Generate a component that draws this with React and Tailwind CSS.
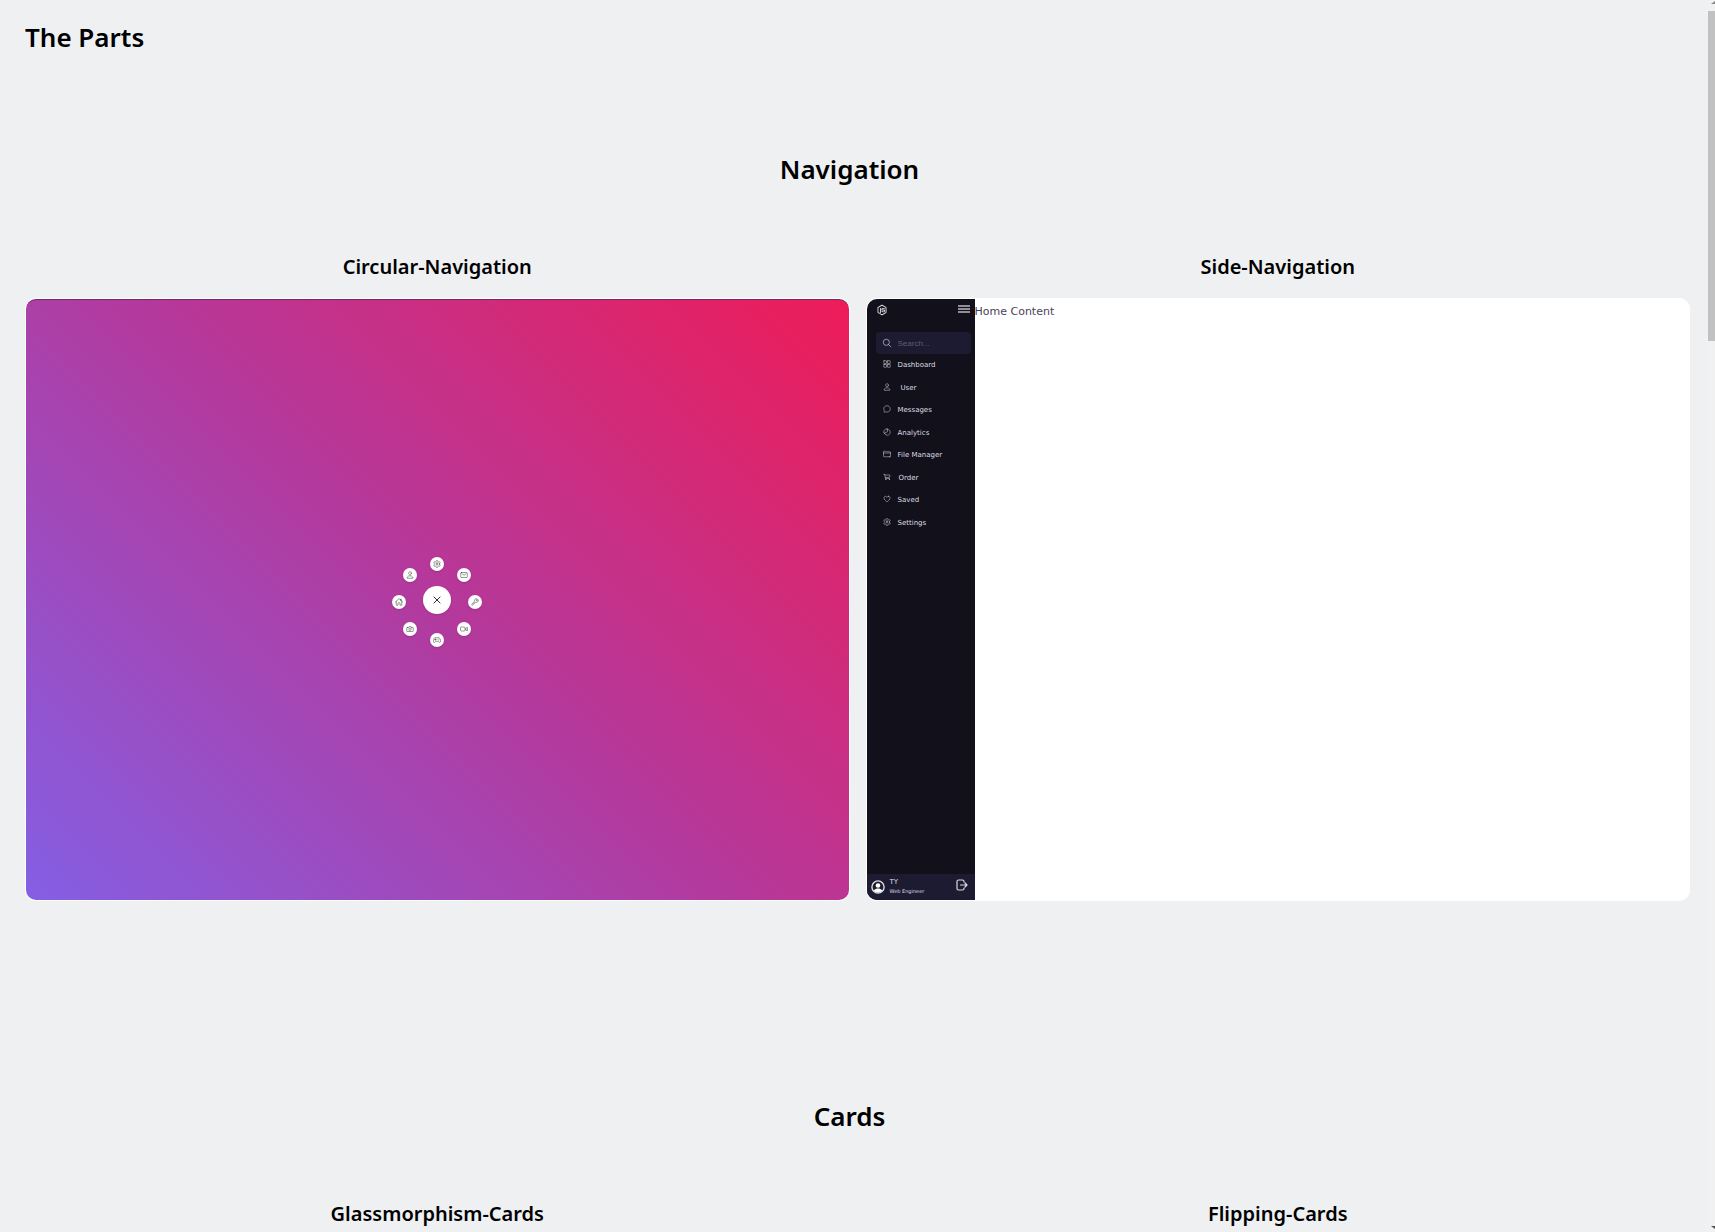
import React from "react";
import {
  IoSettingsOutline, IoMailOutline, IoKeyOutline, IoVideocamOutline, IoGameControllerOutline,
  IoCameraOutline, IoHomeOutline, IoPersonOutline, IoCloseOutline, IoGridOutline,
  IoChatbubbleOutline, IoPieChartOutline, IoFolderOutline, IoCartOutline, IoHeartOutline,
  IoSearchOutline, IoLogoNodejs,
} from "react-icons/io5";

const ring = [
  { label: "Settings", Icon: IoSettingsOutline, place: "left-[38px] top-0" },
  { label: "Mail", Icon: IoMailOutline, place: "left-[65px] top-[11px]" },
  { label: "Keys", Icon: IoKeyOutline, place: "left-[76px] top-[38px]" },
  { label: "Video", Icon: IoVideocamOutline, place: "left-[65px] top-[65px]" },
  { label: "Games", Icon: IoGameControllerOutline, place: "left-[38px] top-[76px]" },
  { label: "Camera", Icon: IoCameraOutline, place: "left-[11px] top-[65px]" },
  { label: "Home", Icon: IoHomeOutline, place: "left-0 top-[38px]" },
  { label: "Profile", Icon: IoPersonOutline, place: "left-[11px] top-[11px]" },
];

const links = [
  { label: "Dashboard", Icon: IoGridOutline, pad: "" },
  { label: "User", Icon: IoPersonOutline, pad: "pl-[3px]" },
  { label: "Messages", Icon: IoChatbubbleOutline, pad: "" },
  { label: "Analytics", Icon: IoPieChartOutline, pad: "" },
  { label: "File Manager", Icon: IoFolderOutline, pad: "" },
  { label: "Order", Icon: IoCartOutline, pad: "pl-px" },
  { label: "Saved", Icon: IoHeartOutline, pad: "" },
  { label: "Settings", Icon: IoSettingsOutline, pad: "" },
];

function AvatarIcon() {
  return (
    <svg className="h-3.5 w-3.5" viewBox="0 0 28 28" fill="none" aria-hidden="true">
      <circle cx="14" cy="14" r="12.2" stroke="#dddce2" strokeWidth="2.8" />
      <circle cx="14" cy="11" r="4.6" fill="#fff" />
      <path d="M5.500 21.500C8 17.500 11 17 14 17s6 .5 8.500 4.500A12 12 0 0 1 14 25a12 12 0 0 1-8.500-3.500z" fill="#fff" />
    </svg>
  );
}

function LogOutIcon() {
  return (
    <svg className="h-3 w-3" viewBox="0 0 24 24" fill="none" stroke="currentColor" strokeWidth="2.4" strokeLinecap="round" strokeLinejoin="round" aria-hidden="true">
      <path d="M16 6V5a3 3 0 0 0-3-3H5a3 3 0 0 0-3 3v14a3 3 0 0 0 3 3h8a3 3 0 0 0 3-3v-1M9 12h13M18 8l4 4-4 4" />
    </svg>
  );
}

function CircularPreview() {
  return (
    <div className="aspect-[824/603] rounded-[11px] bg-white p-px">
      <div className="flex h-full items-center justify-center rounded-[10px] border-t border-[#6d2a68] bg-linear-[45deg,#845fe4,#b4399c,#ee1c58] pt-1">
        <nav aria-label="Circular" className="relative h-[90px] w-[90px]">
          <button aria-label="Close menu" className="absolute left-[31px] top-[29px] flex h-7 w-7 items-center justify-center rounded-full bg-white text-sm text-[#111] shadow-sm">
            <IoCloseOutline className="stroke-[16]" />
          </button>
          {ring.map(({ label, Icon, place }) => (
            <a key={label} href="#" aria-label={label} className={"absolute flex h-3.5 w-3.5 items-center justify-center rounded-full bg-white text-[8px] text-[#333] shadow-sm " + place}>
              <Icon />
            </a>
          ))}
        </nav>
      </div>
    </div>
  );
}

function SidePreview() {
  return (
    <div className="flex aspect-[824/603] overflow-hidden rounded-[11px] bg-white p-px font-['DejaVu_Sans',sans-serif]">
      <aside className="flex w-[108px] flex-col rounded-l-[10px] bg-[#12101a] text-[#dddce2]">
        <div className="flex items-start justify-between pl-[9px] pr-[5px] pt-[5px]">
          <IoLogoNodejs className="h-3 w-3" />
          <button aria-label="Menu" className="mt-px flex h-2 w-3 flex-col justify-between">
            <span className="h-0.5 w-full bg-[#8f8d98]" />
            <span className="h-0.5 w-full bg-[#8f8d98]" />
            <span className="h-0.5 w-full bg-[#8f8d98]" />
          </button>
        </div>
        <label className="ml-[9px] mr-1 mt-4 flex h-[22px] items-center rounded bg-[#1d1b31] pl-1.5">
          <IoSearchOutline className="h-[10px] w-[10px]" />
          <input aria-label="Search" placeholder="Search..." className="ml-1.5 w-14 bg-transparent text-[8px] leading-none font-['Liberation_Sans',sans-serif] placeholder:text-[#5f5d6b]" />
        </label>
        <ul className="flex h-[180px] flex-col text-[7px]">
          {links.map(({ label, Icon, pad }) => (
            <li key={label} className="flex-1">
              <a href="#" className="flex h-full items-center pl-4">
                <Icon className="mb-0.5 mr-[7px] h-2 w-2" />
                <span className={pad}>{label}</span>
              </a>
            </li>
          ))}
        </ul>
        <div className="mt-auto flex h-[26px] items-center rounded-bl-[10px] bg-[#1d1b31] pl-1 pr-[7px]">
          <AvatarIcon />
          <div className="ml-[5px] flex flex-col">
            <span className="text-[7px] leading-[9px]">TY</span>
            <span className="text-[5px] leading-[9px]">Web Engineer</span>
          </div>
          <span className="mb-1 ml-auto"><LogOutIcon /></span>
        </div>
      </aside>
      <p className="pt-1.5 text-[11px] leading-[14px] text-[#4a4358]">Home Content</p>
    </div>
  );
}

function Part({ title, children }) {
  return (
    <article className="flex-1">
      <h3 className="mb-[17px] text-center text-xl leading-7 font-semibold">{title}</h3>
      {children}
    </article>
  );
}

function ScrollTrack() {
  return (
    <div aria-hidden="true" className="flex w-[9px] flex-col items-end overflow-hidden bg-[#f1f1f1]">
      <svg className="h-[11px] w-[7px]" viewBox="0 0 7 11"><path d="M3 4h4V1z" fill="#888" /></svg>
      <div className="h-[330px] w-[7px] bg-[#c1c1c1]" />
      <svg className="mt-auto h-[7px] w-[7px]" viewBox="0 0 7 7"><path d="M3 1h4v3z" fill="#505050" /></svg>
    </div>
  );
}

export default function App() {
  return (
    <div className="flex h-screen overflow-hidden bg-[#eef0f2] font-['Noto_Sans',sans-serif] text-black">
      <main className="flex-1 overflow-hidden pl-[25px] pr-4">
        <h1 className="pt-[19px] text-[26px] leading-9 font-semibold">The Parts</h1>
        <section>
          <h2 className="mt-24 pr-4 text-center text-[26px] leading-9 font-semibold">Navigation</h2>
          <div className="mt-[66px] flex gap-4">
            <Part title="Circular-Navigation"><CircularPreview /></Part>
            <Part title="Side-Navigation"><SidePreview /></Part>
          </div>
        </section>
        <section>
          <h2 className="mt-[197px] pr-4 text-center text-[26px] leading-9 font-semibold">Cards</h2>
          <div className="mt-[66px] flex gap-4">
            <Part title="Glassmorphism-Cards" />
            <Part title="Flipping-Cards" />
          </div>
        </section>
      </main>
      <ScrollTrack />
    </div>
  );
}
